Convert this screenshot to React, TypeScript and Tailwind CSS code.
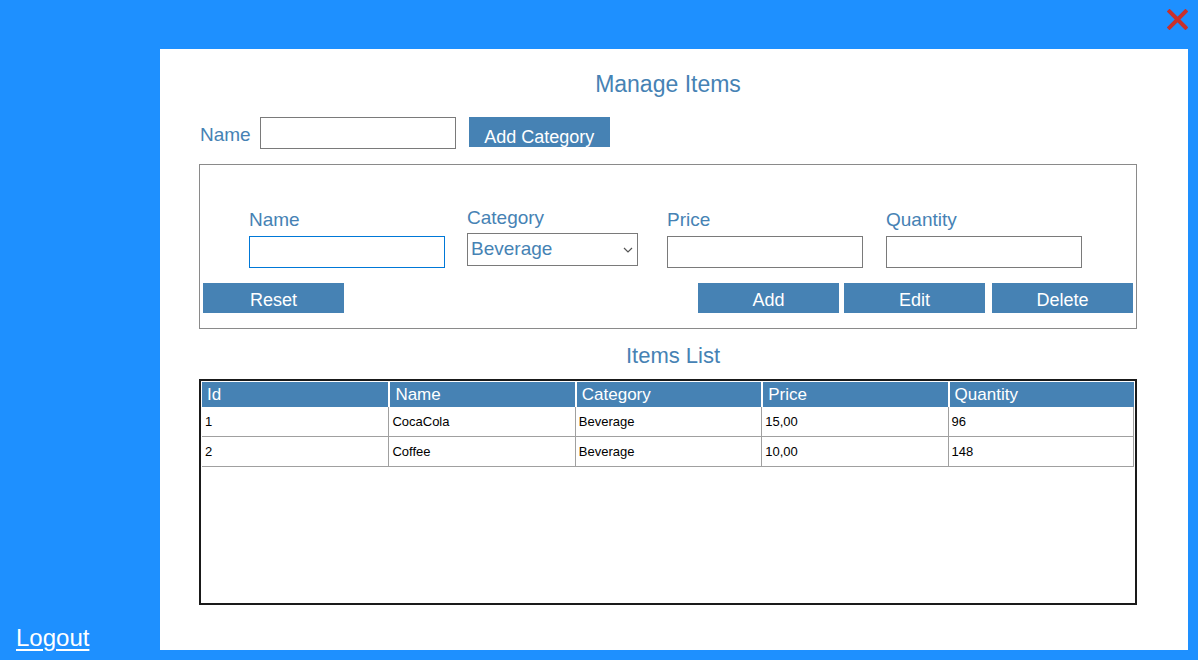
import React from 'react';

const font = { fontFamily: '"Liberation Sans", Arial, sans-serif' };

const rows = [
	{ id: '1', name: 'CocaCola', category: 'Beverage', price: '15,00', quantity: '96' },
	{ id: '2', name: 'Coffee', category: 'Beverage', price: '10,00', quantity: '148' },
];

const Field: React.FC<{ label: string; width: string; focused?: boolean }> = ({ label, width, focused }) => (
	<div className={`flex flex-col ${width}`}>
		<span className="text-[19px] leading-[22px] text-[#4682b4]">{label}</span>
		<input
			className={`mt-[5px] h-[32px] w-full bg-white outline-none border ${focused ? 'border-[#0078d7]' : 'border-[#7a7a7a]'}`}
		/>
	</div>
);

const ActionButton: React.FC<{ children: React.ReactNode }> = ({ children }) => (
	<button className="h-[30px] w-[141px] overflow-hidden bg-[#4682b4] text-[18px] leading-[35px] text-white">{children}</button>
);

export default function App() {
	return (
		<div className="flex h-[660px] w-[1198px] bg-[#1e90ff]" style={font}>
			{/* sidebar */}
			<div className="flex w-[160px] flex-col justify-end pb-[8px] pl-[16px]">
				<a href="#" className="text-[24px] leading-[28px] text-white underline underline-offset-[3px]">
					Logout
				</a>
			</div>

			<div className="flex w-[1038px] flex-col">
				<div className="flex h-[49px] items-start justify-end pr-[10px] pt-[9px]">
					<svg width="21" height="21" viewBox="0 0 21 21">
						<path d="M2.5 2.5 L18.5 18.5 M18.5 2.5 L2.5 18.5" stroke="#c9302c" strokeWidth="4" strokeLinecap="square" />
					</svg>
				</div>

				<div className="flex h-[601px] w-[1028px] flex-col bg-white pl-[39px]">
					<h1 className="mt-[22px] w-[938px] text-center text-[23px] leading-[26px] text-[#4682b4]">Manage Items</h1>

					<div className="mt-[20px] flex items-start">
						<span className="ml-[1px] mt-[7px] text-[19px] leading-[22px] text-[#4682b4]">Name</span>
						<input className="ml-[9px] h-[32px] w-[196px] border border-[#7a7a7a] outline-none" />
						<button className="ml-[13px] h-[30px] w-[141px] overflow-hidden bg-[#4682b4] pt-[9px] text-[18px] leading-[22px] text-white">
							Add Category
						</button>
					</div>

					<div className="mt-[15px] flex h-[165px] w-[938px] flex-col border border-[#8a8a8a] px-[3px]">
						<div className="mt-[44px] flex items-start pl-[46px]">
							<Field label="Name" width="w-[196px]" focused />
							<div className="ml-[22px] mt-[-2px] flex w-[171px] flex-col">
								<span className="text-[19px] leading-[22px] text-[#4682b4]">Category</span>
								<div className="mt-[4px] flex h-[33px] items-center justify-between border border-[#7a7a7a] pl-[3px] pr-[4px]">
									<span className="text-[19px] text-[#4682b4]">Beverage</span>
									<svg width="10" height="6" viewBox="0 0 10 6">
										<path d="M1 1 L5 5 L9 1" fill="none" stroke="#555" strokeWidth="1.2" />
									</svg>
								</div>
							</div>
							<div className="ml-[29px]">
								<Field label="Price" width="w-[196px]" />
							</div>
							<div className="ml-[23px]">
								<Field label="Quantity" width="w-[196px]" />
							</div>
						</div>
						<div className="mt-[15px] flex">
							<ActionButton>Reset</ActionButton>
							<div className="ml-auto flex gap-[5px]">
								<ActionButton>Add</ActionButton>
								<ActionButton>Edit</ActionButton>
								<div className="ml-[2px]">
									<ActionButton>Delete</ActionButton>
								</div>
							</div>
						</div>
					</div>

					<h2 className="mt-[14px] w-[938px] pl-[10px] text-center text-[22px] leading-[26px] text-[#4682b4]">Items List</h2>

					<div className="mt-[10px] h-[226px] w-[938px] border-2 border-[#1a1a1a] p-[1px]">
						<div className="grid h-[25px] grid-cols-5 bg-[#4682b4]">
							{['Id', 'Name', 'Category', 'Price', 'Quantity'].map((h, i) => (
								<div
									key={h}
									className={`pl-[5px] text-[17px] leading-[26px] text-white ${i > 0 ? 'border-l-2 border-white' : ''}`}
								>
									{h}
								</div>
							))}
						</div>
						{rows.map((r) => (
							<div key={r.id} className="grid h-[30px] grid-cols-5 border-b border-[#a0a0a0] text-[13px] leading-[29px] text-black">
								<div className="pl-[3px]">{r.id}</div>
								<div className="border-l border-[#a0a0a0] pl-[3px]">{r.name}</div>
								<div className="border-l border-[#a0a0a0] pl-[3px]">{r.category}</div>
								<div className="border-l border-[#a0a0a0] pl-[3px]">{r.price}</div>
								<div className="border-l border-r border-[#a0a0a0] pl-[3px]">{r.quantity}</div>
							</div>
						))}
					</div>
				</div>
			</div>
		</div>
	);
}
